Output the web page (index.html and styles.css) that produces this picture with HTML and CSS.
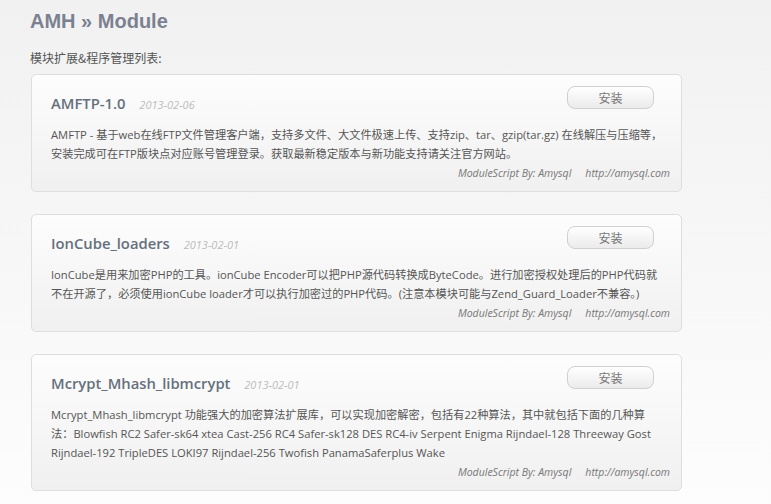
FILE: index.html
```html
<!DOCTYPE html>
<html lang="zh-CN">
<head>
<meta charset="utf-8">
<title>AMH » Module</title>
<link rel="stylesheet" href="styles.css">
</head>
<body>
<div class="page">
  <h1 class="page-title">AMH » Module</h1>
  <p class="page-sub">模块扩展&amp;程序管理列表:</p>

  <div class="card">
    <div class="card-head">
      <div class="card-title">AMFTP-1.0 <span class="date">2013-02-06</span></div>
      <button class="btn">安装</button>
    </div>
    <p class="desc">AMFTP - 基于web在线FTP文件管理客户端，支持多文件、大文件极速上传、支持zip、tar、gzip(tar.gz) 在线解压与压缩等，<br>安装完成可在FTP版块点对应账号管理登录。获取最新稳定版本与新功能支持请关注官方网站。</p>
    <div class="foot"><span>ModuleScript By: Amysql</span><span>http://amysql.com</span></div>
  </div>

  <div class="card">
    <div class="card-head">
      <div class="card-title">IonCube_loaders <span class="date">2013-02-01</span></div>
      <button class="btn">安装</button>
    </div>
    <p class="desc">IonCube是用来加密PHP的工具。ionCube Encoder可以把PHP源代码转换成ByteCode。进行加密授权处理后的PHP代码就<br>不在开源了，必须使用ionCube loader才可以执行加密过的PHP代码。(注意本模块可能与Zend_Guard_Loader不兼容。)</p>
    <div class="foot"><span>ModuleScript By: Amysql</span><span>http://amysql.com</span></div>
  </div>

  <div class="card">
    <div class="card-head">
      <div class="card-title">Mcrypt_Mhash_libmcrypt <span class="date">2013-02-01</span></div>
      <button class="btn">安装</button>
    </div>
    <p class="desc">Mcrypt_Mhash_libmcrypt 功能强大的加密算法扩展库，可以实现加密解密，包括有22种算法，其中就包括下面的几种算<br>法：Blowfish RC2 Safer-sk64 xtea Cast-256 RC4 Safer-sk128 DES RC4-iv Serpent Enigma Rijndael-128 Threeway Gost<br>Rijndael-192 TripleDES LOKI97 Rijndael-256 Twofish PanamaSaferplus Wake</p>
    <div class="foot"><span>ModuleScript By: Amysql</span><span>http://amysql.com</span></div>
  </div>
</div>
</body>
</html>
```
FILE: styles.css
```css
html, body {
  margin: 0;
  padding: 0;
}
body {
  min-height: 504px;
  background: linear-gradient(180deg, #f1f1f1 0%, #f7f7f7 50%, #fdfdfd 100%);
  font-family: "Open Sans", "Noto Sans CJK SC", sans-serif;
  color: #555;
}
.page {
  padding: 9px 0 0 30px;
  width: 652px;
}
.page-title {
  margin: 0;
  font-family: "Liberation Sans", Arial, sans-serif;
  font-weight: bold;
  font-size: 20px;
  line-height: 24px;
  color: #7c8191;
}
.page-sub {
  margin: 17px 0 8px;
  font-family: "Noto Sans CJK SC", sans-serif;
  font-size: 12px;
  line-height: 16px;
  color: #555;
}
.card {
  margin: 0 0 22px 1px;
  border: 1px solid #dedede;
  border-radius: 5px;
  background: linear-gradient(180deg, #fdfdfd 0%, #f0f0f0 100%);
  padding: 11px 11px 9px 19px;
}
.card-head {
  display: flex;
  justify-content: space-between;
  align-items: flex-start;
}
.card-title {
  margin-top: 7px;
  font-family: "Open Sans", "Noto Sans CJK SC", sans-serif;
  font-weight: 600;
  font-size: 14.8px;
  line-height: 20px;
  color: #66707c;
}
.date {
  margin-left: 10px;
  font-weight: normal;
  font-style: italic;
  font-size: 11px;
  color: #bbbbbb;
}
.btn {
  width: 87px;
  height: 23px;
  margin-right: 16px;
  border: 1px solid #d0d0d0;
  border-radius: 8px;
  background: linear-gradient(180deg, #ffffff 0%, #ebebeb 100%);
  font-family: "Noto Sans CJK SC", sans-serif;
  font-size: 12px;
  color: #777;
  padding: 0;
}
.desc {
  margin: 10px 0 0;
  font-family: "Open Sans", "Noto Sans CJK SC", sans-serif;
  font-size: 11.2px;
  line-height: 19px;
  color: #555;
  white-space: nowrap;
}
.foot {
  display: flex;
  justify-content: flex-end;
  gap: 14px;
  margin-top: 1px;
  font-style: italic;
  font-size: 10.5px;
  line-height: 18px;
  color: #777;
}
```
